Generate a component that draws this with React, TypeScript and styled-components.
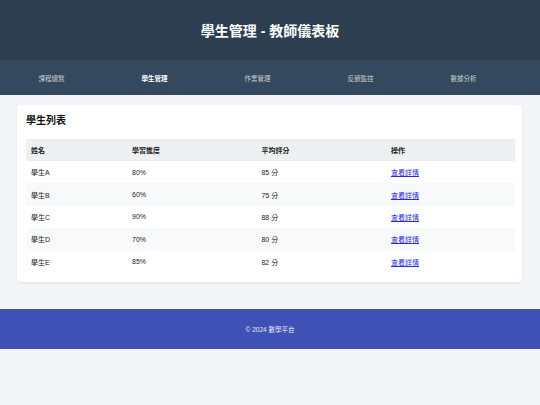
import React from 'react';
import styled, { createGlobalStyle } from 'styled-components';

const GlobalStyle = createGlobalStyle`
  html, body {
    margin: 0;
    padding: 0;
    background-color: #f4f5f9;
    font-family: 'Liberation Sans', 'Noto Sans CJK TC', sans-serif;
  }
`;

const Page = styled.div`
  min-height: 405px;
  background-color: #f4f5f9;
  display: flex;
  flex-direction: column;
`;

const Header = styled.header`
  height: 60px;
  background-color: #2c3e50;
  color: #fff;
  display: flex;
  align-items: center;
  justify-content: center;
`;

const HeaderTitle = styled.h1`
  margin: 0;
  font-size: 14px;
  font-weight: bold;
`;

const Nav = styled.nav`
  height: 35px;
  background-color: #34495e;
  display: flex;
  align-items: center;
  padding-right: 25px;
`;

const NavItem = styled.a<{ $active?: boolean }>`
  flex: 1;
  text-align: center;
  font-size: 6.5px;
  color: ${(p) => (p.$active ? '#fff' : '#c7ccd1')};
  font-weight: ${(p) => (p.$active ? 'bold' : 'normal')};
  text-decoration: none;
  cursor: pointer;
`;

const Main = styled.main`
  padding: 10px 18px 27px 17px;
`;

const Card = styled.section`
  background-color: #fff;
  border-radius: 4px;
  box-shadow: 0 1px 3px rgba(0, 0, 0, 0.08);
  padding: 9px 7px 9px 9px;
`;

const CardTitle = styled.h2`
  margin: 0 0 11px;
  font-size: 10px;
  line-height: 14px;
  font-weight: bold;
  color: #111;
`;

const Table = styled.table`
  width: 100%;
  border-collapse: collapse;
  table-layout: fixed;
  font-size: 7px;
  color: #222;
`;

const HeadCell = styled.th<{ $width: string }>`
  width: ${(p) => p.$width};
  height: 22px;
  padding: 0 5px;
  text-align: left;
  font-weight: bold;
  background-color: #ecf0f1;
`;

const Row = styled.tr<{ $striped: boolean }>`
  background-color: ${(p) => (p.$striped ? '#f8f9fa' : '#fff')};
`;

const Cell = styled.td`
  height: 22.4px;
  padding: 0 5px;
`;

const DetailLink = styled.a`
  color: #2a2ad8;
  text-decoration: underline;
  cursor: pointer;
`;

const Footer = styled.footer`
  height: 40px;
  background-color: #3f51b5;
  color: #e8eaf6;
  display: flex;
  align-items: center;
  justify-content: center;
  font-size: 6.5px;
`;

const navItems = ['課程總覽', '學生管理', '作業管理', '反饋監控', '數據分析'];

const students = [
  { name: '學生A', progress: '80%', score: 85 },
  { name: '學生B', progress: '60%', score: 75 },
  { name: '學生C', progress: '90%', score: 88 },
  { name: '學生D', progress: '70%', score: 80 },
  { name: '學生E', progress: '85%', score: 82 },
];

const App: React.FC = () => {
  return (
    <Page>
      <GlobalStyle />
      <Header>
        <HeaderTitle>學生管理 - 教師儀表板</HeaderTitle>
      </Header>
      <Nav>
        {navItems.map((item) => (
          <NavItem key={item} $active={item === '學生管理'}>
            {item}
          </NavItem>
        ))}
      </Nav>
      <Main>
        <Card>
          <CardTitle>學生列表</CardTitle>
          <Table>
            <thead>
              <tr>
                <HeadCell $width="20.3%">姓名</HeadCell>
                <HeadCell $width="26.6%">學習進度</HeadCell>
                <HeadCell $width="26.6%">平均評分</HeadCell>
                <HeadCell $width="26.5%">操作</HeadCell>
              </tr>
            </thead>
            <tbody>
              {students.map((s, i) => (
                <Row key={s.name} $striped={i % 2 === 1}>
                  <Cell>{s.name}</Cell>
                  <Cell>{s.progress}</Cell>
                  <Cell>{s.score} 分</Cell>
                  <Cell>
                    <DetailLink>查看詳情</DetailLink>
                  </Cell>
                </Row>
              ))}
            </tbody>
          </Table>
        </Card>
      </Main>
      <Footer>© 2024 數學平台</Footer>
    </Page>
  );
};

export default App;
